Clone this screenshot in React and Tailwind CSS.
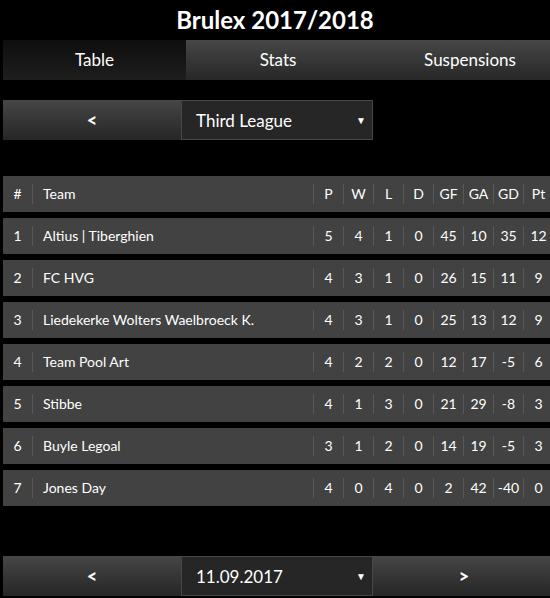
import { useState } from "react"

const rows = [
  { pos: 1, team: "Altius | Tiberghien", p: 5, w: 4, l: 1, d: 0, gf: 45, ga: 10, gd: 35, pt: 12 },
  { pos: 2, team: "FC HVG", p: 4, w: 3, l: 1, d: 0, gf: 26, ga: 15, gd: 11, pt: 9 },
  { pos: 3, team: "Liedekerke Wolters Waelbroeck K.", p: 4, w: 3, l: 1, d: 0, gf: 25, ga: 13, gd: 12, pt: 9 },
  { pos: 4, team: "Team Pool Art", p: 4, w: 2, l: 2, d: 0, gf: 12, ga: 17, gd: -5, pt: 6 },
  { pos: 5, team: "Stibbe", p: 4, w: 1, l: 3, d: 0, gf: 21, ga: 29, gd: -8, pt: 3 },
  { pos: 6, team: "Buyle Legoal", p: 3, w: 1, l: 2, d: 0, gf: 14, ga: 19, gd: -5, pt: 3 },
  { pos: 7, team: "Jones Day", p: 4, w: 0, l: 4, d: 0, gf: 2, ga: 42, gd: -40, pt: 0 },
]

const gridCols = "grid grid-cols-[29px_281px_30px_30px_30px_30px_30px_30px_30px_30px]"

function Row({ cells }) {
  return (
    <div className={`${gridCols} h-[36px] bg-[#424242] text-[14px] text-white`}>
      {cells.map((c, i) => (
        <div key={i} className="flex items-center h-full">
          {i === 0 ? (
            <div className="w-full text-center leading-[20px]">{c}</div>
          ) : i === 1 ? (
            <div className="w-full border-l border-[#585858] pl-[10px] leading-[20px] whitespace-nowrap">{c}</div>
          ) : (
            <div className="w-full border-l border-[#585858] text-center leading-[20px]">{c}</div>
          )}
        </div>
      ))}
    </div>
  )
}

function Arrow({ dir }) {
  return (
    <button className="h-full flex items-center justify-center bg-gradient-to-b from-[#464646] to-[#262626] text-white text-[18px] font-black">
      {dir === "left" ? "<" : ">"}
    </button>
  )
}

function Select({ value }) {
  return (
    <div className="h-full flex items-center justify-between bg-[#262626] border border-[#474747] pl-[14px] pr-[6px] text-[17px] text-white">
      <span className="pt-[2px]">{value}</span>
      <span className="text-[10px] leading-none">▼</span>
    </div>
  )
}

export default function App() {
  const [tab, setTab] = useState("Table")
  const tabs = ["Table", "Stats", "Suspensions"]

  return (
    <div className="w-[550px] h-[598px] overflow-hidden bg-black font-['Lato',sans-serif] text-white">
      <div className="h-[40px] flex items-center justify-center text-[24px] font-bold">Brulex 2017/2018</div>

      {/* Tabs */}
      <div className="pl-[3px]">
        <div className="w-[570px] h-[40px] grid grid-cols-[183px_184px_200px] text-[17px]">
          {tabs.map((t) => (
            <button
              key={t}
              onClick={() => setTab(t)}
              className={`flex items-center justify-center ${
                tab === t ? "bg-gradient-to-b from-[#0e0e0e] to-[#1e1e1e]" : "bg-gradient-to-b from-[#474747] to-[#272727]"
              }`}
            >
              {t}
            </button>
          ))}
        </div>
      </div>

      {/* League selector */}
      <div className="pl-[3px] mt-[20px] h-[40px] grid grid-cols-[178px_192px]">
        <Arrow dir="left" />
        <Select value="Third League" />
      </div>

      {/* Table */}
      <div className="pl-[3px] mt-[36px] flex flex-col gap-[6px]">
        <Row cells={["#", "Team", "P", "W", "L", "D", "GF", "GA", "GD", "Pt"]} />
        {rows.map((r) => (
          <Row key={r.pos} cells={[r.pos, r.team, r.p, r.w, r.l, r.d, r.gf, r.ga, r.gd, r.pt]} />
        ))}
      </div>

      {/* Date selector */}
      <div className="pl-[3px] mt-[50px] w-[570px] h-[40px] grid grid-cols-[178px_192px_182px]">
        <Arrow dir="left" />
        <Select value="11.09.2017" />
        <Arrow dir="right" />
      </div>
    </div>
  )
}
